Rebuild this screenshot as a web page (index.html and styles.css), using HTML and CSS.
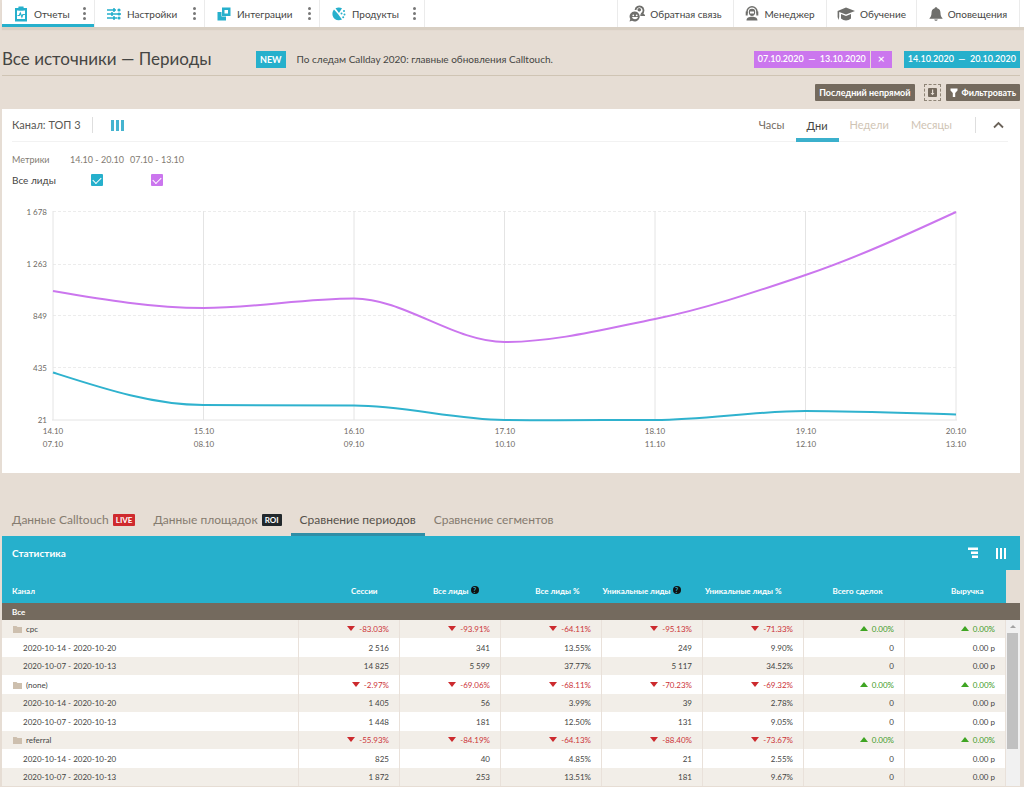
FILE: index.html
```html
<!DOCTYPE html>
<html lang="ru">
<head>
<meta charset="utf-8">
<title>Все источники — Периоды</title>
<meta name="viewport" content="width=device-width, initial-scale=1">
<link rel="stylesheet" href="styles.css">
</head>
<body>
<header class="topbar">
  <div class="nav-item nav-item--active">
    <a class="nav-link" href="#"><svg class="nav-icon" width="14" height="16" viewBox="0 0 14 16"><path fill="#26b0cc" d="M1 2h3.500V.5h5V2H13v13.500H1z"/><path fill="#fff" d="M3 4.500h8V13H3z"/><path fill="#26b0cc" d="M4.500 1.500h5v3h-5z"/><path fill="none" stroke="#26b0cc" stroke-width="1.200" d="M3.500 9.500h1.800L6.300 7l1.600 4 1-2.500h2"/></svg>Отчеты</a>
    <button class="kebab" type="button" aria-label="Меню отчетов"><i></i><i></i><i></i></button>
  </div>
  <div class="nav-item">
    <a class="nav-link" href="#"><svg class="nav-icon" width="14" height="12" viewBox="0 0 14 12"><g stroke="#26b0cc" stroke-width="1.500"><path d="M0 2h9M0 6h14M0 10h10"/></g><g fill="#26b0cc"><circle cx="12" cy="2" r="1.600"/><path d="M6 .2h2v3.600H6z"/><path d="M4 4.200h2v3.600H4z"/><circle cx="12" cy="6" r="1.500"/><path d="M6 8.200h2v3.600H6z"/><circle cx="12" cy="10" r="1.600"/></g></svg>Настройки</a>
    <button class="kebab" type="button" aria-label="Меню настроек"><i></i><i></i><i></i></button>
  </div>
  <div class="nav-item">
    <a class="nav-link" href="#"><svg class="nav-icon" width="14" height="14" viewBox="0 0 14 14"><path fill="#26b0cc" d="M.5 5h4v4.500H9v4H.5z"/><path fill="#26b0cc" fill-rule="evenodd" d="M5 .5h8.500V9H5zM7.500 3v3.500H11V3z"/></svg>Интеграции</a>
    <button class="kebab" type="button" aria-label="Меню интеграций"><i></i><i></i><i></i></button>
  </div>
  <div class="nav-item">
    <a class="nav-link" href="#"><svg class="nav-icon" width="14" height="14" viewBox="0 0 14 14"><path fill="#26b0cc" d="M2 2.500 6 7l4 5.500C6 14.500 1.500 12.500.6 8.500.1 6 .7 4 2 2.500zM3.500 1.200C6 .2 8.300.4 10 1.300L7 6z"/><g fill="#26b0cc"><circle cx="12" cy="4" r="1"/><circle cx="9.500" cy="6.500" r="1"/><circle cx="12.500" cy="7.500" r="1"/><circle cx="11.200" cy="10.300" r="1"/></g></svg>Продукты</a>
    <button class="kebab" type="button" aria-label="Меню продуктов"><i></i><i></i><i></i></button>
  </div>
  <div class="nav-gap"></div>
  <a class="nav-item nav-item--tool" href="#"><svg class="nav-icon" width="16" height="17" viewBox="0 0 16 17"><g fill="none" stroke="#6f6f6c" stroke-width="1.800"><path d="M6.500 5a4 4 0 1 1 6.500 3.500l1.800 1.700h-3.500"/></g><circle cx="10.300" cy="4.800" r="1.800" fill="#6f6f6c"/><path fill="#6f6f6c" d="M6 6.500a5 5 0 1 1-3 9.200L.5 16.500l.8-2.500A5 5 0 0 1 6 6.500z"/><g fill="#fff"><circle cx="4.300" cy="10.300" r=".9"/><circle cx="7.700" cy="10.300" r=".9"/><path d="M3 12h6c-.8 3-5.200 3-6 0z"/></g></svg>Обратная связь</a>
  <a class="nav-item nav-item--tool" href="#"><svg class="nav-icon" width="14" height="15" viewBox="0 0 14 15"><path fill="none" stroke="#6f6f6c" stroke-width="1.500" d="M2 7.500V5.800a5 5 0 0 1 10 0v1.700"/><path fill="#6f6f6c" d="M.7 5.500h2v4h-2zM11.300 5.500h2v4h-2z"/><path fill="#6f6f6c" d="M7 2.800a3.200 3.200 0 0 1 3.200 3.400C10.200 8.500 8.800 10 7 10S3.800 8.500 3.800 6.200A3.200 3.200 0 0 1 7 2.800zM1.500 14.500c0-3 2.500-3.800 5.500-3.800s5.500.8 5.500 3.800z"/><path fill="#fff" d="M5 5.500h4v2H5z"/></svg>Менеджер</a>
  <a class="nav-item nav-item--tool" href="#"><svg class="nav-icon" width="18" height="14" viewBox="0 0 18 14"><path fill="#6f6f6c" d="M9 .5 18 4 9 7.500 2.200 5v5L1.500 13 .6 10V4zM4 7l5 2 5-2v4.500c-3 2.500-7 2.500-10 0z"/></svg>Обучение</a>
  <a class="nav-item nav-item--tool" href="#"><svg class="nav-icon" width="14" height="14" viewBox="0 0 14 14"><path fill="#6f6f6c" d="M7 .3c.8 0 1.200.4 1.300 1C10.700 2 11.500 4 11.500 6c0 2.700.8 4 2 5.300v.5H.5v-.5C1.700 10 2.500 8.700 2.500 6c0-2 .8-4 3.200-4.700.1-.6.5-1 1.300-1zM5.200 12.400h3.600c-.4 1.800-3.200 1.800-3.600 0z"/></svg>Оповещения</a>
</header>

<main class="page">
  <section class="heading">
    <h1 class="title">Все источники — Периоды</h1>
    <span class="new-badge">NEW</span>
    <a class="news" href="#">По следам Callday 2020: главные обновления Calltouch.</a>
    <div class="periods">
      <button class="period period--violet" type="button">07.10.2020 &nbsp;— &nbsp;13.10.2020</button>
      <button class="period period--close" type="button" aria-label="Удалить период">×</button>
      <button class="period period--cyan" type="button">14.10.2020 &nbsp;— &nbsp;20.10.2020</button>
    </div>
  </section>

  <div class="actions">
    <button class="action" type="button">Последний непрямой</button>
    <button class="export" type="button" aria-label="Выгрузить"><svg width="9" height="9" viewBox="0 0 9 9"><rect width="9" height="9" rx="1" fill="#746a5e"/><path fill="#e6ddd4" d="M4 1.500h1.200V5h1.300l-2 2.300L2.600 5H4z"/></svg></button>
    <button class="action" type="button"><svg width="8" height="9" viewBox="0 0 8 9"><path fill="#fff" d="M.5.5h7v2L5.200 5v4H2.800V5L.5 2.500z"/></svg>Фильтровать</button>
  </div>

  <section class="card">
    <div class="card-head">
      <h2 class="card-title">Канал: ТОП 3</h2>
      <button class="columns" type="button" aria-label="Столбцы"><i></i><i></i><i></i></button>
      <nav class="scale">
        <button class="scale-tab" type="button">Часы</button>
        <button class="scale-tab scale-tab--active" type="button">Дни</button>
        <button class="scale-tab" type="button" disabled>Недели</button>
        <button class="scale-tab" type="button" disabled>Месяцы</button>
      </nav>
      <button class="collapse" type="button" aria-label="Свернуть"><svg width="11" height="8" viewBox="0 0 11 8"><path d="m1 6.500 4.500-4.500L10 6.500" fill="none" stroke="#6b635a" stroke-width="1.800"/></svg></button>
    </div>
    <div class="metrics">
      <span class="metrics-label">Метрики</span><label class="metrics-label metrics-period" for="m1">14.10 - 20.10</label><label class="metrics-label metrics-period" for="m2">07.10 - 13.10</label>
      <span class="metrics-name">Все лиды</span><input class="check" id="m1" type="checkbox" checked><input class="check check--violet" id="m2" type="checkbox" checked>
    </div>
    <svg class="chart" viewBox="0 0 1018 252" role="img" aria-label="Все лиды по дням">
      <g class="grid-dash"><path d="M51 11.500H954M51 64.500H954M51 115.500H954M51 167.500H954"/></g>
      <g class="grid-line"><path d="M51 11V220M201.500 11V220M352 11V220M502.500 11V220M653 11V220M803.500 11V220M954 11V220M50 220H955"/></g>
      <path class="line line--violet" d="M51 91C101 99.500 151 108 201.500 108S302 98.500 352 98.500C402 98.500 452 142 502.500 142S603 129 653 119S753 92 803.500 75S904 35 954 12"/>
      <path class="line line--cyan" d="M51 172.500C101 188.500 151 205 201.500 205S302 205.500 352 205.500S452 219.500 502.500 220S603 220 653 220S753 211 803.500 211S904 213 954 214.500"/>
      <g class="axis axis--y"><text x="45" y="15">1 678</text><text x="45" y="67">1 263</text><text x="45" y="119">849</text><text x="45" y="171">435</text><text x="45" y="223">21</text></g>
      <g class="axis axis--x"><text x="51" y="234">14.10</text><text x="202" y="234">15.10</text><text x="352" y="234">16.10</text><text x="503" y="234">17.10</text><text x="653" y="234">18.10</text><text x="804" y="234">19.10</text><text x="954" y="234">20.10</text>
      <text x="51" y="247">07.10</text><text x="202" y="247">08.10</text><text x="352" y="247">09.10</text><text x="503" y="247">10.10</text><text x="653" y="247">11.10</text><text x="804" y="247">12.10</text><text x="954" y="247">13.10</text></g>
    </svg>
  </section>

  <nav class="tabs">
    <a class="tab" href="#">Данные Calltouch<span class="tag tag--live">LIVE</span></a>
    <a class="tab" href="#">Данные площадок<span class="tag">ROI</span></a>
    <a class="tab tab--active" href="#">Сравнение периодов</a>
    <a class="tab" href="#">Сравнение сегментов</a>
  </nav>

  <section class="stats">
    <div class="stats-head">
      <h2 class="stats-title">Статистика</h2>
      <button class="tree" type="button" aria-label="Группировка"><svg width="10" height="12" viewBox="0 0 10 12"><path fill="#fff" d="M0 .5h10V3H0zM3 4.500h7V7H3zM4 8.500h6V11H4z"/></svg></button>
      <button class="columns columns--white" type="button" aria-label="Столбцы"><i></i><i></i><i></i></button>
    </div>
    <div class="stats-body">
      <table class="table">
        <thead>
          <tr><th>Канал</th><th>Сессии</th><th>Все лиды <span class="help">?</span></th><th>Все лиды %</th><th>Уникальные лиды <span class="help">?</span></th><th>Уникальные лиды %</th><th>Всего сделок</th><th>Выручка</th></tr>
          <tr class="total"><th colspan="8">Все</th></tr>
        </thead>
        <tbody>
          <tr><td class="group"><svg class="folder" viewBox="0 0 9 7"><path d="M0 0h3.500l1 1H9v6H0z"/></svg>cpc</td><td class="down">-83.03%</td><td class="down">-93.91%</td><td class="down">-64.11%</td><td class="down">-95.13%</td><td class="down">-71.33%</td><td class="up">0.00%</td><td class="up">0.00%</td></tr>
          <tr><td>2020-10-14 - 2020-10-20</td><td>2 516</td><td>341</td><td>13.55%</td><td>249</td><td>9.90%</td><td>0</td><td>0.00 р</td></tr>
          <tr><td>2020-10-07 - 2020-10-13</td><td>14 825</td><td>5 599</td><td>37.77%</td><td>5 117</td><td>34.52%</td><td>0</td><td>0.00 р</td></tr>
          <tr><td class="group"><svg class="folder" viewBox="0 0 9 7"><path d="M0 0h3.500l1 1H9v6H0z"/></svg>(none)</td><td class="down">-2.97%</td><td class="down">-69.06%</td><td class="down">-68.11%</td><td class="down">-70.23%</td><td class="down">-69.32%</td><td class="up">0.00%</td><td class="up">0.00%</td></tr>
          <tr><td>2020-10-14 - 2020-10-20</td><td>1 405</td><td>56</td><td>3.99%</td><td>39</td><td>2.78%</td><td>0</td><td>0.00 р</td></tr>
          <tr><td>2020-10-07 - 2020-10-13</td><td>1 448</td><td>181</td><td>12.50%</td><td>131</td><td>9.05%</td><td>0</td><td>0.00 р</td></tr>
          <tr><td class="group"><svg class="folder" viewBox="0 0 9 7"><path d="M0 0h3.500l1 1H9v6H0z"/></svg>referral</td><td class="down">-55.93%</td><td class="down">-84.19%</td><td class="down">-64.13%</td><td class="down">-88.40%</td><td class="down">-73.67%</td><td class="up">0.00%</td><td class="up">0.00%</td></tr>
          <tr><td>2020-10-14 - 2020-10-20</td><td>825</td><td>40</td><td>4.85%</td><td>21</td><td>2.55%</td><td>0</td><td>0.00 р</td></tr>
          <tr><td>2020-10-07 - 2020-10-13</td><td>1 872</td><td>253</td><td>13.51%</td><td>181</td><td>9.67%</td><td>0</td><td>0.00 р</td></tr>
        </tbody>
      </table>
      <div class="rail"><div class="rail-total"></div><div class="scrollbar"><div class="arrow"></div><div class="thumb"></div></div></div>
    </div>
  </section>
</main>
</body>
</html>
```
FILE: styles.css
```css
* { box-sizing: border-box; }
body {
  margin: 0;
  height: 100vh;
  overflow: hidden;
  background: #e6ddd4;
  color: #454543;
  font: 10px/14px Lato, "Open Sans", "Noto Sans", sans-serif;
}
button { margin: 0; padding: 0; border: 0; background: none; font: inherit; color: inherit; cursor: pointer; }
a { color: inherit; text-decoration: none; }
h1, h2 { margin: 0; font-weight: 400; }
svg { display: block; flex: none; }

.topbar {
  display: grid;
  grid-template-columns: 93px 110px 115px 105px 1fr 116px 93px 90px 103px;
  height: 27px;
  margin-left: 2px;
  padding-right: 4px;
  background: #fff;
  box-shadow: 0 3px 1px #d9d0c4;
}
.nav-item { display: flex; align-items: center; border-right: 1px solid #ebebeb; padding: 0 6px 0 12px; white-space: nowrap; }
.nav-item--active { box-shadow: inset 0 -3px #26b0cc; }
.nav-link { display: flex; flex: 1; align-items: center; gap: 6px; }
.nav-gap { border-right: 1px solid #ebebeb; }
.nav-item--tool { justify-content: center; gap: 5px; padding: 0; }
.kebab { display: grid; gap: 2px; padding: 2px; }
.kebab i { width: 3px; height: 3px; border-radius: 50%; background: #777; }

.page { padding: 0 4px 0 2px; }
.heading { display: flex; align-items: center; height: 49px; padding-top: 16px; border-bottom: 1px solid #cfc4b4; }
.title { width: 254px; font-size: 17px; line-height: 24px; white-space: nowrap; }
.new-badge { padding: 0 4px; background: #26b0cc; color: #fff; font-size: 9px; font-weight: 700; line-height: 17px; }
.news { margin-left: 11px; white-space: nowrap; }
.periods { display: flex; margin-left: auto; }
.period { height: 17px; padding: 0 4px; color: #fff; font-size: 9px; font-weight: 600; white-space: nowrap; }
.period--violet { background: #cb76ee; }
.period--close { width: 21px; margin: 0 12px 0 1px; background: #cb76ee; font-size: 12px; }
.period--cyan { background: #26b0cc; }

.actions { display: flex; justify-content: flex-end; padding: 8px 0; }
.action { display: flex; align-items: center; gap: 4px; height: 17px; padding: 0 4px; border-radius: 1px; background: #746a5e; color: #fff; font-size: 9px; font-weight: 700; }
.export { display: grid; place-items: center; width: 17px; height: 17px; margin: 0 5px 0 9px; border: 1px dashed #8f8577; }

.card { background: #fff; padding-bottom: 21px; }
.card-head { display: flex; align-items: center; height: 33px; margin: 0 12px 0 10px; border-bottom: 1px solid #f2f2f2; }
.card-title { padding-right: 11px; border-right: 1px solid #dedede; font-size: 11px; line-height: 16px; color: #5a5854; }
.columns { display: flex; gap: 2px; margin-left: 18px; }
.columns i { width: 3px; height: 11px; background: #45b4d0; }
.columns--white i { width: 2px; background: #fff; }
.scale { display: flex; margin-right: 12px; margin-left: auto; align-self: stretch; }
.scale-tab { padding: 0 11px; font-size: 11px; color: #746c62; }
.scale-tab--active { margin-bottom: -1px; border-bottom: 4px solid #3bb0cc; padding-top: 4px; color: #454543; }
.scale-tab:disabled { color: #cfc4b4; cursor: default; }
.collapse { padding: 4px 0 4px 17px; border-left: 1px solid #dedede; margin-right: 4px; }

.metrics { display: grid; grid-template-columns: 55px 60px 60px; align-items: center; padding: 10px 10px 0; grid-template-rows: 16px 23px; }
.metrics-label { font-size: 9px; color: #827b72; white-space: nowrap; }
.metrics-period { text-align: center; }
.metrics-name { white-space: nowrap; }
.check { appearance: none; width: 12px; height: 12px; margin: 0; justify-self: center; border-radius: 1px; background: #26b0cc; display: grid; place-items: center; }
.check--violet { background: #cb76ee; }
.check:checked::after { content: ""; width: 7px; height: 4px; border: solid #fff; border-width: 0 0 1px 1px; transform: rotate(-45deg); }

.chart { width: 100%; height: auto; margin-top: 9px; }
.grid-dash { stroke: #ececec; stroke-dasharray: 3 2; }
.grid-line { stroke: #e4e4e4; stroke-width: 1; fill: none; }
.line { fill: none; stroke-width: 2; }
.line--violet { stroke: #cb76ee; }
.line--cyan { stroke: #2fb2ce; }
.axis { font-size: 8px; fill: #6e6a64; }
.axis--y { text-anchor: end; }
.axis--x { text-anchor: middle; }

.tabs { display: flex; align-items: flex-end; height: 63px; padding-left: 1px; }
.tab { display: flex; align-items: center; gap: 4px; height: 33px; padding: 0 9px; font-size: 12px; color: #857b6f; white-space: nowrap; }
.tab--active { border-bottom: 3px solid #2f8ea6; padding-top: 3px; color: #56514b; }
.tag { padding: 0 3px; border-radius: 1px; background: #22282c; color: #fff; font-size: 8px; font-weight: 700; line-height: 12px; }
.tag--live { background: #cf2a2e; }

.stats-head { display: flex; align-items: center; height: 34px; padding: 0 14px 0 10px; background: #26b0cc; color: #fff; }
.stats-title { flex: 1; font-weight: 700; font-size: 10px; }
.stats-body { display: grid; grid-template-columns: 1fr 14px; }
.table { width: 100%; table-layout: fixed; border-collapse: collapse; font-size: 8px; line-height: 12px; }
.table th { height: 33px; width: 101px; padding: 9px 22px 0 0; background: #26b0cc; color: #fff; font-weight: 700; text-align: right; white-space: nowrap; }
.table th:first-child { width: auto; padding-left: 10px; text-align: left; }
.table .total th { height: 17px; padding-top: 0; background: #746a5e; }
.help { display: inline-block; width: 8px; height: 8px; border-radius: 50%; background: #111; color: #26b0cc; font-size: 7px; line-height: 8px; text-align: center; vertical-align: 1px; }
.table td { height: 18px; padding: 0 10px 0 0; border-right: 1px solid #e9e1da; text-align: right; white-space: nowrap; }
.table tr:nth-child(even) td { height: 19px; background: #fff; }
.table tr:nth-child(odd) td { background: #f2eee8; }
.table td:first-child { padding-left: 21px; text-align: left; }
.table td.group { padding-left: 11px; }
.folder { display: inline-block; width: 9px; height: 7px; margin-right: 4px; fill: #cdbfae; vertical-align: -1px; }
.table .down { color: #cc3338; }
.table .up { color: #3f9b28; }
.down::before, .up::before { content: ""; display: inline-block; margin-right: 4px; border: solid transparent; border-width: 0 4px; vertical-align: 1px; }
.down::before { border-top: 5px solid #cc2a2e; }
.up::before { border-bottom: 5px solid #3fa523; }
.rail { display: flex; flex-direction: column; padding-top: 33px; }
.rail-total { height: 17px; background: #746a5e; }
.scrollbar { flex: 1; padding: 0 2px 0 1px; background: #f1f1f1; }
.arrow { height: 13px; display: grid; place-items: center; }
.arrow::after { content: ""; border: solid transparent; border-width: 0 3px 3px; border-bottom-color: #a3a3a3; }
.thumb { height: 116px; background: #c1c1c1; }
```
